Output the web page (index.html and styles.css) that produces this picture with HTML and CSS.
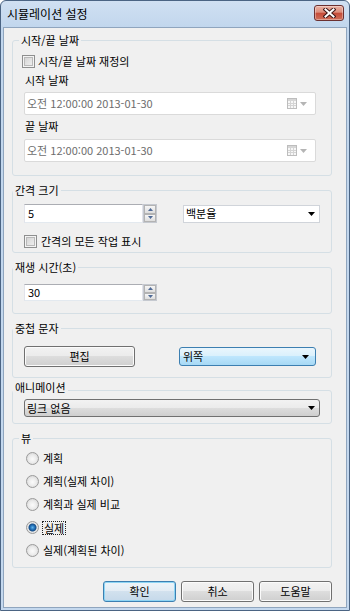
FILE: index.html
```html
<!DOCTYPE html>
<html lang="ko">
  <head>
    <meta charset="UTF-8" />
    <meta name="viewport" content="width=device-width, initial-scale=1.0" />
    <title>시뮬레이션 설정</title>
    <link rel="stylesheet" href="styles.css">
  </head>
  <body>
    <div class="window">
      <div class="titlebar">
        <span class="title">시뮬레이션 설정</span>
        <div class="close-btn">
          <svg width="13" height="10" viewBox="0 0 13 10">
            <path d="M2.5 1.5L10.5 8.5M10.5 1.5L2.5 8.5" stroke="#3d1717" stroke-width="4" stroke-linecap="square" />
            <path d="M2.5 1.5L10.5 8.5M10.5 1.5L2.5 8.5" stroke="#fff" stroke-width="2" stroke-linecap="square" />
          </svg>
        </div>
      </div>

      <div class="client">
        <!-- start / end dates -->
        <fieldset class="group group-dates">
          <legend>시작/끝 날짜</legend>
          <div class="check check-override"><span class="checkbox"></span>시작/끝 날짜 재정의</div>
          <div class="field-label">시작 날짜</div>
          <div class="datepicker">
            <span>오전 12:00:00 2013-01-30</span>
            <span class="dp-icons">
              <svg width="10" height="11" viewBox="0 0 10 11">
                <rect x="0.5" y="0.5" width="9" height="10" fill="#f7f7f7" stroke="#bdbdbd" />
                <rect x="1" y="1" width="8" height="2" fill="#d6d6d6" />
                <path d="M1 5.5H9M1 7.5H9M3.5 3V10M6.5 3V10" stroke="#d4d4d4" />
              </svg>
              <svg width="7" height="4" viewBox="0 0 7 4"><path d="M0 0H7L3.5 4Z" fill="#b5b5b5" /></svg>
            </span>
          </div>
          <div class="field-label field-label-end">끝 날짜</div>
          <div class="datepicker datepicker-end">
            <span>오전 12:00:00 2013-01-30</span>
            <span class="dp-icons">
              <svg width="10" height="11" viewBox="0 0 10 11">
                <rect x="0.5" y="0.5" width="9" height="10" fill="#f7f7f7" stroke="#bdbdbd" />
                <rect x="1" y="1" width="8" height="2" fill="#d6d6d6" />
                <path d="M1 5.5H9M1 7.5H9M3.5 3V10M6.5 3V10" stroke="#d4d4d4" />
              </svg>
              <svg width="7" height="4" viewBox="0 0 7 4"><path d="M0 0H7L3.5 4Z" fill="#b5b5b5" /></svg>
            </span>
          </div>
        </fieldset>

        <!-- interval size -->
        <fieldset class="group group-interval">
          <legend>간격 크기</legend>
          <div class="row">
            <div class="spin-field">
              <div class="textbox">5</div>
              <div class="spin">
                <div class="spin-btn"><svg width="5" height="3" viewBox="0 0 5 3"><path d="M0 3L2.5 0L5 3Z" fill="#4f6a96" /></svg></div>
                <div class="spin-btn"><svg width="5" height="3" viewBox="0 0 5 3"><path d="M0 0H5L2.5 3Z" fill="#4f6a96" /></svg></div>
              </div>
            </div>
            <div class="combo combo-unit">
              <span>백분율</span>
              <svg width="7" height="4" viewBox="0 0 7 4"><path d="M0 0H7L3.5 4Z" fill="#000" /></svg>
            </div>
          </div>
          <div class="check check-all"><span class="checkbox"></span>간격의 모든 작업 표시</div>
        </fieldset>

        <!-- playback duration -->
        <fieldset class="group group-duration">
          <legend>재생 시간(초)</legend>
          <div class="spin-field spin-field-short">
            <div class="textbox">30</div>
            <div class="spin">
              <div class="spin-btn"><svg width="5" height="3" viewBox="0 0 5 3"><path d="M0 3L2.5 0L5 3Z" fill="#4f6a96" /></svg></div>
              <div class="spin-btn"><svg width="5" height="3" viewBox="0 0 5 3"><path d="M0 0H5L2.5 3Z" fill="#4f6a96" /></svg></div>
            </div>
          </div>
        </fieldset>

        <!-- overlay text -->
        <fieldset class="group group-overlay">
          <legend>중첩 문자</legend>
          <div class="row">
            <button class="btn btn-edit">편집</button>
            <div class="combo combo-blue">
              <span>위쪽</span>
              <svg width="7" height="4" viewBox="0 0 7 4"><path d="M0 0H7L3.5 4Z" fill="#000" /></svg>
            </div>
          </div>
        </fieldset>

        <!-- animation -->
        <fieldset class="group group-anim">
          <legend>애니메이션</legend>
          <div class="combo combo-gray">
            <span>링크 없음</span>
            <svg width="7" height="4" viewBox="0 0 7 4"><path d="M0 0H7L3.5 4Z" fill="#000" /></svg>
          </div>
        </fieldset>

        <!-- view -->
        <fieldset class="group group-view">
          <legend>뷰</legend>
          <div class="radio-row"><span class="radio"></span>계획</div>
          <div class="radio-row"><span class="radio"></span>계획(실제 차이)</div>
          <div class="radio-row"><span class="radio"></span>계획과 실제 비교</div>
          <div class="radio-row"><span class="radio checked"></span><span class="focus">실제</span></div>
          <div class="radio-row"><span class="radio"></span>실제(계획된 차이)</div>
        </fieldset>

        <div class="dialog-buttons">
          <button class="btn btn-dlg btn-default">확인</button>
          <button class="btn btn-dlg">취소</button>
          <button class="btn btn-dlg">도움말</button>
        </div>
      </div>
    </div>
  </body>
</html>
```

FILE: styles.css
```css
* {
  margin: 0;
  padding: 0;
  box-sizing: border-box;
}

body {
  font-family: "Noto Sans CJK KR", "Noto Sans", sans-serif;
  font-size: 11px;
  line-height: 13px;
  color: #000;
  background-color: #fff;
}

button {
  font: inherit;
  color: inherit;
}

/* window frame */
.window {
  width: 350px;
  height: 611px;
  display: flex;
  flex-direction: column;
  padding: 0 2px 2px;
  border: 1px solid #4b6483;
  border-radius: 6px 6px 0 0;
  background: linear-gradient(#d0e0f2, #c1d6ed 27px, #c4d8ee);
}

.titlebar {
  height: 26px;
  display: flex;
  justify-content: space-between;
  padding-left: 4px;
}

.title {
  font-size: 12px;
  line-height: 26px;
}

.close-btn {
  width: 30px;
  height: 16px;
  margin: 4px 3px 0 0;
  display: flex;
  align-items: center;
  justify-content: center;
  border: 1px solid #6b3030;
  border-radius: 3px;
  background: linear-gradient(#eab0a2 0%, #dc8d7b 45%, #c54a37 50%, #cf6f5a 100%);
  box-shadow: inset 0 0 0 1px rgba(255, 255, 255, 0.35);
}

.client {
  flex: 1;
  background-color: #f0f0f0;
  border: 1px solid #8fa5be;
}

/* group boxes */
.group {
  min-width: 0;
  margin: 8px 14px 0 8px;
  padding: 0 11px;
  border: 1px solid #d5dfe5;
  border-radius: 3px;
}

.group legend {
  padding: 0 2px;
  margin-left: -11px;
  line-height: 13px;
}

.group-dates {
  margin-top: 6px;
  padding-top: 8px;
  padding-bottom: 13px;
}

.group-dates legend,
.group-view legend {
  margin-left: -5px;
}

.group-interval {
  padding-top: 7px;
  padding-bottom: 4px;
}

.group-duration {
  padding-top: 10px;
  padding-bottom: 12px;
}

.group-overlay {
  padding-top: 11px;
  padding-bottom: 10px;
}

.group-anim {
  margin-top: 3px;
  padding-bottom: 6px;
}

.group-anim legend {
  padding-bottom: 5px;
}

.group-view {
  padding-top: 2px;
  padding-bottom: 5px;
}

.row {
  display: flex;
  align-items: center;
}

/* checkboxes */
.check {
  display: flex;
  align-items: center;
  height: 13px;
  gap: 3px;
}

.check-override {
  margin-left: -2px;
}

.check-all {
  margin-top: 12px;
  gap: 4px;
}

.checkbox {
  width: 13px;
  height: 13px;
  border: 1px solid #8e8f8f;
  background: linear-gradient(135deg, #cfcfcf, #f4f4f4);
  box-shadow: inset 0 0 0 1px #f4f4f4, inset 0 0 0 2px #b9b9b9;
}

/* date pickers */
.field-label {
  margin-top: 6px;
  padding-left: 1px;
}

.field-label-end {
  margin-top: 5px;
}

.datepicker {
  width: 292px;
  height: 23px;
  margin-top: 5px;
  display: flex;
  align-items: center;
  justify-content: space-between;
  padding: 0 8px 0 2px;
  border: 1px solid #dadada;
  border-radius: 2px;
  background-color: #fff;
  color: #6d6d6d;
}

.datepicker-end {
  margin-top: 6px;
}

.dp-icons {
  display: flex;
  align-items: center;
  gap: 3px;
}

/* spin boxes */
.spin-field {
  display: flex;
  height: 19px;
}

.spin-field-short {
  height: 17px;
}

.textbox {
  width: 119px;
  display: flex;
  align-items: center;
  padding-left: 3px;
  border: 1px solid;
  border-color: #abadb3 #e2e3ea #e3e9ef #e2e3ea;
  background-color: #fff;
}

.spin {
  width: 14px;
  display: flex;
  flex-direction: column;
  border: 1px solid #c5c9d0;
  background-color: #fff;
}

.spin-btn {
  flex: 1;
  display: flex;
  align-items: center;
  justify-content: center;
  border: 1px solid #b3b3b3;
  background: linear-gradient(#f6f6f6, #dedede);
}

/* combos */
.combo {
  display: flex;
  align-items: center;
  justify-content: space-between;
}

.combo-unit {
  width: 137px;
  height: 18px;
  margin-left: auto;
  padding: 0 4px 0 2px;
  border: 1px solid #d0d4da;
  background-color: #fff;
}

.combo-blue {
  width: 137px;
  height: 19px;
  margin-left: 44px;
  padding: 0 6px 0 3px;
  border: 1px solid #3c7fb1;
  border-radius: 3px;
  background: linear-gradient(#eaf6fd 0%, #d9f0fc 50%, #bee6fd 50%, #a7d9f5 100%);
}

.combo-gray {
  width: 296px;
  height: 18px;
  padding: 0 4px 0 2px;
  border: 1px solid #707070;
  border-radius: 3px;
  background: linear-gradient(#f2f2f2 0%, #ebebeb 50%, #dddddd 50%, #cfcfcf 100%);
}

/* buttons */
.btn {
  height: 21px;
  border: 1px solid #707070;
  border-radius: 3px;
  background: linear-gradient(#f2f2f2 0%, #ebebeb 50%, #dddddd 50%, #cfcfcf 100%);
  box-shadow: inset 0 0 0 1px #fbfbfb;
  cursor: pointer;
}

.btn-edit {
  width: 111px;
}

.btn-dlg {
  width: 73px;
}

.btn-default {
  border-color: #3c7fb1;
  background: linear-gradient(#eef4f9 0%, #e2ecf4 50%, #d2e1ee 50%, #c5d9ea 100%);
  box-shadow: inset 0 0 0 1px #8ed5f4;
}

.dialog-buttons {
  display: flex;
  justify-content: flex-end;
  gap: 5px;
  margin: 13px 14px 0 0;
}

/* radios */
.radio-row {
  display: flex;
  align-items: center;
  gap: 4px;
  height: 23px;
  padding-left: 2px;
}

.radio {
  width: 13px;
  height: 13px;
  border-radius: 50%;
  border: 1px solid #9a9a9a;
  background: radial-gradient(circle at 50% 55%, #fbfbfb 0, #ececec 45%, #cdcdcd 100%);
}

.radio.checked {
  background: radial-gradient(circle, #5fb4ea 0, #1d68b0 2.5px, #184e86 3.5px, #e9e9e9 4.5px, #d2d2d2 100%);
}

.focus {
  display: inline-block;
  line-height: 12px;
  padding: 0 1px;
  outline: 1px dotted #222;
}
```
